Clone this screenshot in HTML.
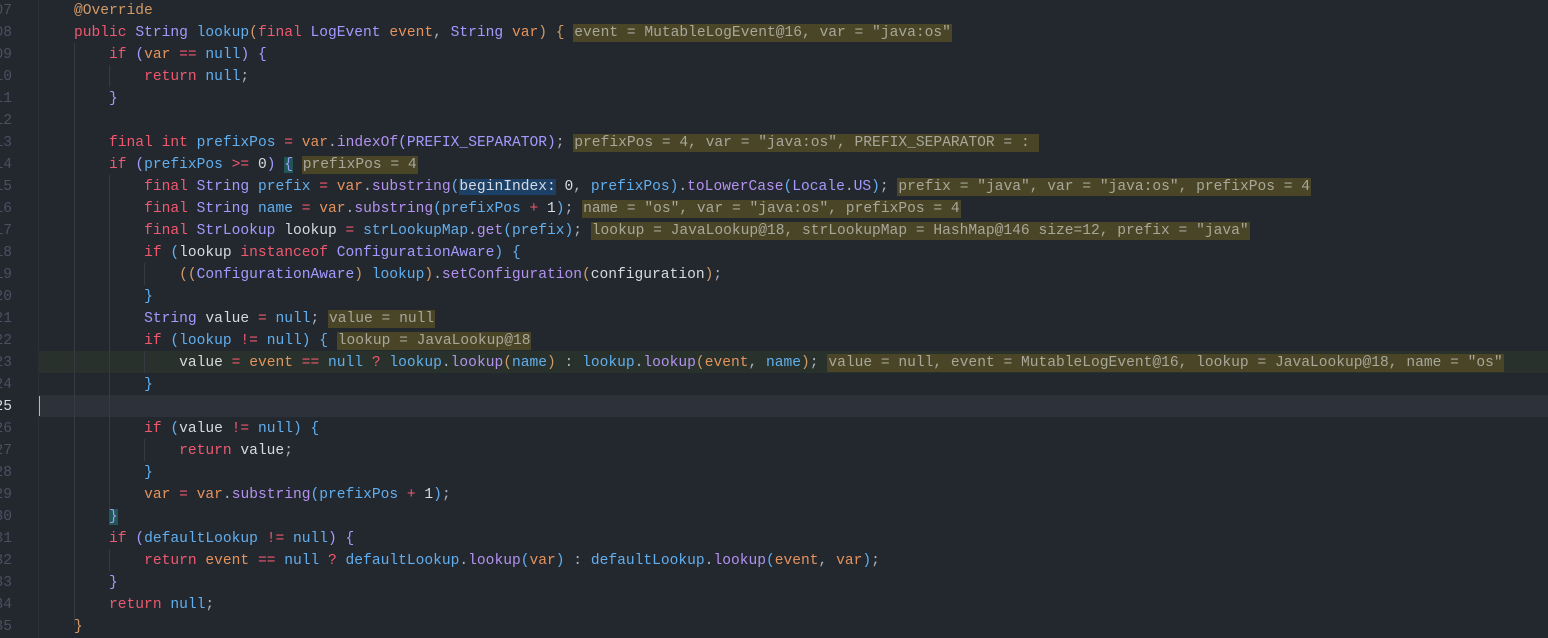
<!DOCTYPE html>
<html><head><meta charset="utf-8"><style>
html,body{margin:0;padding:0;background:#23272e;width:1548px;height:638px;overflow:hidden}
body{position:relative;font-family:"Liberation Mono",monospace;font-size:14.6px;color:#abb2bf}
.ln{position:absolute;left:0;width:1548px;height:22px;line-height:22px;white-space:pre;margin-top:2px}
.num{position:absolute;left:-28px;width:40px;text-align:right;color:#495162;top:0;overflow:visible}
.code{position:absolute;left:74px;top:0}
.k{color:#ef596f}.t{color:#a29bfe}.m{color:#b392f0}.v{color:#61afef}.p{color:#e5935d}.n{color:#61afef}.w{color:#d7dae0}.a{color:#d19a66}
.h{background:#4a4527;color:#a7a79a;padding:1px 1px}
.bi{background:#1d4166;color:#d7dae0}
.tb{background:#1f5656}
.g{position:absolute;width:1px;background:#353a43}
</style></head><body>
<div style="position:absolute;left:38px;top:351px;width:1510px;height:22px;background:#28312b"></div>
<div style="position:absolute;left:38px;top:395px;width:1510px;height:22px;background:#2c313a"></div>
<div style="position:absolute;left:38px;top:396px;width:2px;height:20px;background:#aab8d6"></div>
<div class="g" style="left:38px;top:0;height:638px;background:#2b3038"></div>
<div class="g" style="left:74px;top:43px;height:582px"></div>
<div class="g" style="left:109px;top:65px;height:22px"></div>
<div class="g" style="left:109px;top:175px;height:344px"></div>
<div class="g" style="left:109px;top:549px;height:22px"></div>
<div class="g" style="left:144px;top:263px;height:22px"></div>
<div class="g" style="left:144px;top:351px;height:22px"></div>
<div class="g" style="left:144px;top:439px;height:22px"></div>

<div class="ln" style="top:-2px"><span class="num">107</span><span class="code"><span class="a">@Override</span></span></div>
<div class="ln" style="top:20px"><span class="num">108</span><span class="code"><span class="k">public</span> <span class="t">String</span> <span class="v">lookup</span><span class="a">(</span><span class="k">final</span> <span class="t">LogEvent</span> <span class="p">event</span>, <span class="t">String</span> <span class="p">var</span><span class="a">)</span> <span class="a">{</span> <span class="h">event = MutableLogEvent@16, var = "java:os"</span></span></div>
<div class="ln" style="top:42px"><span class="num">109</span><span class="code">    <span class="k">if</span> <span class="t">(</span><span class="p">var</span> <span class="k">==</span> <span class="n">null</span><span class="t">)</span> <span class="t">{</span></span></div>
<div class="ln" style="top:64px"><span class="num">110</span><span class="code">        <span class="k">return</span> <span class="n">null</span>;</span></div>
<div class="ln" style="top:86px"><span class="num">111</span><span class="code">    <span class="t">}</span></span></div>
<div class="ln" style="top:108px"><span class="num">112</span></div>
<div class="ln" style="top:130px"><span class="num">113</span><span class="code">    <span class="k">final</span> <span class="k">int</span> <span class="v">prefixPos</span> <span class="k">=</span> <span class="p">var</span>.<span class="m">indexOf</span><span class="t">(</span><span class="t">PREFIX_SEPARATOR</span><span class="t">)</span>; <span class="h">prefixPos = 4, var = "java:os", PREFIX_SEPARATOR = : </span></span></div>
<div class="ln" style="top:152px"><span class="num">114</span><span class="code">    <span class="k">if</span> <span class="t">(</span><span class="v">prefixPos</span> <span class="k">&gt;=</span> <span class="w">0</span><span class="t">)</span> <span class="t tb">{</span> <span class="h">prefixPos = 4</span></span></div>
<div class="ln" style="top:174px"><span class="num">115</span><span class="code">        <span class="k">final</span> <span class="t">String</span> <span class="v">prefix</span> <span class="k">=</span> <span class="p">var</span>.<span class="m">substring</span><span class="v">(</span><span class="bi">beginIndex:</span> <span class="w">0</span>, <span class="v">prefixPos</span><span class="v">)</span>.<span class="m">toLowerCase</span><span class="v">(</span><span class="t">Locale</span>.<span class="t">US</span><span class="v">)</span>; <span class="h">prefix = "java", var = "java:os", prefixPos = 4</span></span></div>
<div class="ln" style="top:196px"><span class="num">116</span><span class="code">        <span class="k">final</span> <span class="t">String</span> <span class="v">name</span> <span class="k">=</span> <span class="p">var</span>.<span class="m">substring</span><span class="v">(</span><span class="v">prefixPos</span> <span class="k">+</span> <span class="w">1</span><span class="v">)</span>; <span class="h">name = "os", var = "java:os", prefixPos = 4</span></span></div>
<div class="ln" style="top:218px"><span class="num">117</span><span class="code">        <span class="k">final</span> <span class="t">StrLookup</span> <span class="w">lookup</span> <span class="k">=</span> <span class="v">strLookupMap</span>.<span class="m">get</span><span class="v">(</span><span class="v">prefix</span><span class="v">)</span>; <span class="h">lookup = JavaLookup@18, strLookupMap = HashMap@146 size=12, prefix = "java"</span></span></div>
<div class="ln" style="top:240px"><span class="num">118</span><span class="code">        <span class="k">if</span> <span class="v">(</span><span class="w">lookup</span> <span class="k">instanceof</span> <span class="t">ConfigurationAware</span><span class="v">)</span> <span class="v">{</span></span></div>
<div class="ln" style="top:262px"><span class="num">119</span><span class="code">            <span class="a">((</span><span class="t">ConfigurationAware</span><span class="a">)</span> <span class="v">lookup</span><span class="a">)</span>.<span class="m">setConfiguration</span><span class="a">(</span><span class="w">configuration</span><span class="a">)</span>;</span></div>
<div class="ln" style="top:284px"><span class="num">120</span><span class="code">        <span class="v">}</span></span></div>
<div class="ln" style="top:306px"><span class="num">121</span><span class="code">        <span class="t">String</span> <span class="w">value</span> <span class="k">=</span> <span class="n">null</span>; <span class="h">value = null</span></span></div>
<div class="ln" style="top:328px"><span class="num">122</span><span class="code">        <span class="k">if</span> <span class="v">(</span><span class="v">lookup</span> <span class="k">!=</span> <span class="n">null</span><span class="v">)</span> <span class="v">{</span> <span class="h">lookup = JavaLookup@18</span></span></div>
<div class="ln" style="top:350px"><span class="num">123</span><span class="code">            <span class="w">value</span> <span class="k">=</span> <span class="p">event</span> <span class="k">==</span> <span class="n">null</span> <span class="k">?</span> <span class="v">lookup</span>.<span class="m">lookup</span><span class="a">(</span><span class="v">name</span><span class="a">)</span> : <span class="v">lookup</span>.<span class="m">lookup</span><span class="a">(</span><span class="p">event</span>, <span class="v">name</span><span class="a">)</span>; <span class="h">value = null, event = MutableLogEvent@16, lookup = JavaLookup@18, name = "os"</span></span></div>
<div class="ln" style="top:372px"><span class="num">124</span><span class="code">        <span class="v">}</span></span></div>
<div class="ln" style="top:394px"><span class="num" style="color:#d7dae0">125</span></div>
<div class="ln" style="top:416px"><span class="num">126</span><span class="code">        <span class="k">if</span> <span class="v">(</span><span class="w">value</span> <span class="k">!=</span> <span class="n">null</span><span class="v">)</span> <span class="v">{</span></span></div>
<div class="ln" style="top:438px"><span class="num">127</span><span class="code">            <span class="k">return</span> <span class="w">value</span>;</span></div>
<div class="ln" style="top:460px"><span class="num">128</span><span class="code">        <span class="v">}</span></span></div>
<div class="ln" style="top:482px"><span class="num">129</span><span class="code">        <span class="p">var</span> <span class="k">=</span> <span class="p">var</span>.<span class="m">substring</span><span class="v">(</span><span class="v">prefixPos</span> <span class="k">+</span> <span class="w">1</span><span class="v">)</span>;</span></div>
<div class="ln" style="top:504px"><span class="num">130</span><span class="code">    <span class="t tb">}</span></span></div>
<div class="ln" style="top:526px"><span class="num">131</span><span class="code">    <span class="k">if</span> <span class="t">(</span><span class="v">defaultLookup</span> <span class="k">!=</span> <span class="n">null</span><span class="t">)</span> <span class="t">{</span></span></div>
<div class="ln" style="top:548px"><span class="num">132</span><span class="code">        <span class="k">return</span> <span class="p">event</span> <span class="k">==</span> <span class="n">null</span> <span class="k">?</span> <span class="v">defaultLookup</span>.<span class="m">lookup</span><span class="v">(</span><span class="p">var</span><span class="v">)</span> : <span class="v">defaultLookup</span>.<span class="m">lookup</span><span class="v">(</span><span class="p">event</span>, <span class="p">var</span><span class="v">)</span>;</span></div>
<div class="ln" style="top:570px"><span class="num">133</span><span class="code">    <span class="t">}</span></span></div>
<div class="ln" style="top:592px"><span class="num">134</span><span class="code">    <span class="k">return</span> <span class="n">null</span>;</span></div>
<div class="ln" style="top:614px"><span class="num">135</span><span class="code"><span class="a">}</span></span></div>
</body></html>
